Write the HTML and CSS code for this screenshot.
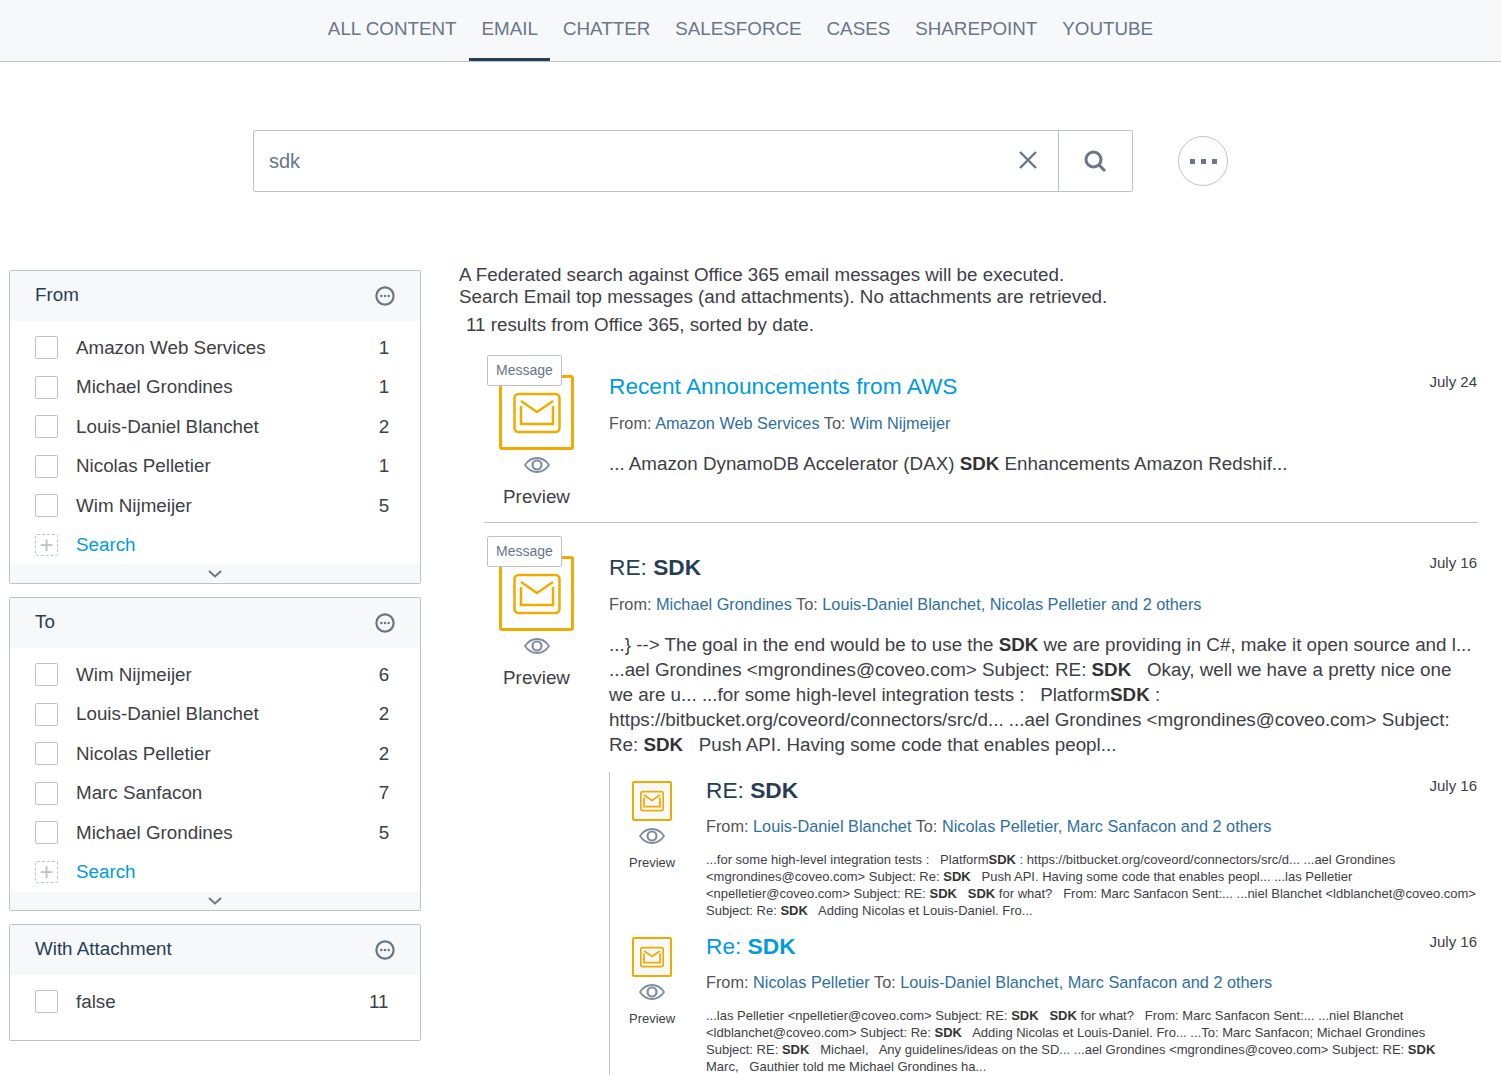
FILE: index.html
```html
<!DOCTYPE html>
<html lang="en">
<head>
    <meta charset="UTF-8">
    <title>Email search</title>
    <link rel="stylesheet" href="styles.css">
</head>
<body>
    <svg class="defs" width="0" height="0">
        <symbol id="mail" viewBox="0 0 48 48">
            <rect x="1.5" y="5" width="45" height="38" rx="4" fill="none" stroke="currentColor"/>
            <path d="M8 17v18h32V17" fill="none" stroke="currentColor"/>
            <path d="M8 12l16 11 16-11" fill="none" stroke="currentColor"/>
        </symbol>
        <symbol id="eye" viewBox="0 0 26 16">
            <path d="M1 8c3-4.500 7-7 12-7s9 2.500 12 7c-3 4.500-7 7-12 7S4 12.500 1 8z" fill="none" stroke="currentColor" stroke-width="1.800"/>
            <circle cx="13" cy="8" r="4.500" fill="none" stroke="currentColor" stroke-width="2.200"/>
        </symbol>
        <symbol id="more" viewBox="0 0 22 22">
            <circle cx="11" cy="11" r="9.500" fill="none" stroke="currentColor" stroke-width="2.400"/>
            <circle cx="7" cy="11" r="1.400" fill="currentColor"/>
            <circle cx="11" cy="11" r="1.400" fill="currentColor"/>
            <circle cx="15" cy="11" r="1.400" fill="currentColor"/>
        </symbol>
        <symbol id="chevron" viewBox="0 0 14 8">
            <path d="M1 1l6 5.500L13 1" fill="none" stroke="currentColor" stroke-width="2"/>
        </symbol>
    </svg>

    <!-- Tabs -->
    <nav class="tabs">
        <a class="tab">ALL CONTENT</a>
        <a class="tab active">EMAIL</a>
        <a class="tab">CHATTER</a>
        <a class="tab">SALESFORCE</a>
        <a class="tab">CASES</a>
        <a class="tab">SHAREPOINT</a>
        <a class="tab">YOUTUBE</a>
    </nav>

    <!-- Search box -->
    <div class="search-row">
        <div class="searchbox">
            <div class="search-input">sdk</div>
            <button class="clear-btn">
                <svg width="20" height="20" viewBox="0 0 20 20"><path d="M2 2l16 16M18 2L2 18" fill="none" stroke="currentColor" stroke-width="2.400"/></svg>
            </button>
            <button class="search-btn">
                <svg width="24" height="24" viewBox="0 0 24 24"><circle cx="10.500" cy="10.500" r="7.500" fill="none" stroke="currentColor" stroke-width="3"/><path d="M16 16l6 6" fill="none" stroke="currentColor" stroke-width="3"/></svg>
            </button>
        </div>
        <div class="settings"><span></span><span></span><span></span></div>
    </div>

    <div class="main">
        <!-- Facets -->
        <aside class="facets">
            <section class="facet">
                <header class="facet-head">From <svg class="facet-more"><use href="#more"/></svg></header>
                <ul class="facet-list">
                    <li><i class="check"></i><span class="label">Amazon Web Services</span><span class="count">1</span></li>
                    <li><i class="check"></i><span class="label">Michael Grondines</span><span class="count">1</span></li>
                    <li><i class="check"></i><span class="label">Louis-Daniel Blanchet</span><span class="count">2</span></li>
                    <li><i class="check"></i><span class="label">Nicolas Pelletier</span><span class="count">1</span></li>
                    <li><i class="check"></i><span class="label">Wim Nijmeijer</span><span class="count">5</span></li>
                    <li><i class="check dashed">+</i><span class="label link">Search</span></li>
                </ul>
                <div class="facet-foot"><svg class="chevron"><use href="#chevron"/></svg></div>
            </section>
            <section class="facet">
                <header class="facet-head">To <svg class="facet-more"><use href="#more"/></svg></header>
                <ul class="facet-list">
                    <li><i class="check"></i><span class="label">Wim Nijmeijer</span><span class="count">6</span></li>
                    <li><i class="check"></i><span class="label">Louis-Daniel Blanchet</span><span class="count">2</span></li>
                    <li><i class="check"></i><span class="label">Nicolas Pelletier</span><span class="count">2</span></li>
                    <li><i class="check"></i><span class="label">Marc Sanfacon</span><span class="count">7</span></li>
                    <li><i class="check"></i><span class="label">Michael Grondines</span><span class="count">5</span></li>
                    <li><i class="check dashed">+</i><span class="label link">Search</span></li>
                </ul>
                <div class="facet-foot"><svg class="chevron"><use href="#chevron"/></svg></div>
            </section>
            <section class="facet">
                <header class="facet-head">With Attachment <svg class="facet-more"><use href="#more"/></svg></header>
                <ul class="facet-list short">
                    <li><i class="check"></i><span class="label">false</span><span class="count wide">11</span></li>
                </ul>
            </section>
        </aside>

        <!-- Results -->
        <div class="results">
            <p class="notice">A Federated search against Office 365 email messages will be executed.<br>Search Email top messages (and attachments). No attachments are retrieved.</p>
            <p class="summary">11 results from Office 365, sorted by date.</p>

            <article class="result first">
                <div class="thumb">
                    <span class="badge">Message</span>
                    <div class="icon-box"><svg class="mail"><use href="#mail"/></svg></div>
                    <svg class="eye"><use href="#eye"/></svg>
                    <div class="preview">Preview</div>
                </div>
                <div class="body">
                    <div class="title-row"><a class="title link">Recent Announcements from AWS</a><span class="date">July 24</span></div>
                    <div class="meta">From: <a>Amazon Web Services</a> To: <a>Wim Nijmeijer</a></div>
                    <p class="excerpt">... Amazon DynamoDB Accelerator (DAX) <b>SDK</b> Enhancements Amazon Redshif...</p>
                </div>
            </article>

            <article class="result">
                <div class="thumb">
                    <span class="badge">Message</span>
                    <div class="icon-box"><svg class="mail"><use href="#mail"/></svg></div>
                    <svg class="eye"><use href="#eye"/></svg>
                    <div class="preview">Preview</div>
                </div>
                <div class="body">
                    <div class="title-row"><a class="title">RE: <b>SDK</b></a><span class="date">July 16</span></div>
                    <div class="meta">From: <a>Michael Grondines</a> To: <a>Louis-Daniel Blanchet, Nicolas Pelletier and 2 others</a></div>
                    <p class="excerpt">...} --&gt; The goal in the end would be to use the <b>SDK</b> we are providing in C#, make it open source and l... ...ael Grondines &lt;mgrondines@coveo.com&gt; Subject: RE: <b>SDK</b> &nbsp; Okay, well we have a pretty nice one we are u... ...for some high-level integration tests : &nbsp; Platform<b>SDK</b> : https://bitbucket.org/coveord/connectors/src/d... ...ael Grondines &lt;mgrondines@coveo.com&gt; Subject: Re: <b>SDK</b> &nbsp; Push API. Having some code that enables peopl...</p>

                    <div class="children">
                        <div class="child">
                            <div class="child-thumb">
                                <div class="child-icon"><svg class="mail"><use href="#mail"/></svg></div>
                                <svg class="eye"><use href="#eye"/></svg>
                                <div class="child-preview">Preview</div>
                            </div>
                            <div class="body">
                                <div class="title-row"><a class="title">RE: <b>SDK</b></a><span class="date">July 16</span></div>
                                <div class="meta">From: <a>Louis-Daniel Blanchet</a> To: <a>Nicolas Pelletier, Marc Sanfacon and 2 others</a></div>
                                <p class="child-excerpt">...for some high-level integration tests : &nbsp; Platform<b>SDK</b> : https://bitbucket.org/coveord/connectors/src/d... ...ael Grondines<br>&lt;mgrondines@coveo.com&gt; Subject: Re: <b>SDK</b> &nbsp; Push API. Having some code that enables peopl... ...las Pelletier<br>&lt;npelletier@coveo.com&gt; Subject: RE: <b>SDK</b> &nbsp; <b>SDK</b> for what? &nbsp; From: Marc Sanfacon Sent:... ...niel Blanchet &lt;ldblanchet@coveo.com&gt;<br>Subject: Re: <b>SDK</b> &nbsp; Adding Nicolas et Louis-Daniel. Fro...</p>
                            </div>
                        </div>
                        <div class="child">
                            <div class="child-thumb">
                                <div class="child-icon"><svg class="mail"><use href="#mail"/></svg></div>
                                <svg class="eye"><use href="#eye"/></svg>
                                <div class="child-preview">Preview</div>
                            </div>
                            <div class="body">
                                <div class="title-row"><a class="title link">Re: <b>SDK</b></a><span class="date">July 16</span></div>
                                <div class="meta">From: <a>Nicolas Pelletier</a> To: <a>Louis-Daniel Blanchet, Marc Sanfacon and 2 others</a></div>
                                <p class="child-excerpt">...las Pelletier &lt;npelletier@coveo.com&gt; Subject: RE: <b>SDK</b> &nbsp; <b>SDK</b> for what? &nbsp; From: Marc Sanfacon Sent:... ...niel Blanchet<br>&lt;ldblanchet@coveo.com&gt; Subject: Re: <b>SDK</b> &nbsp; Adding Nicolas et Louis-Daniel. Fro... ...To: Marc Sanfacon; Michael Grondines<br>Subject: RE: <b>SDK</b> &nbsp; Michael, &nbsp; Any guidelines/ideas on the SD... ...ael Grondines &lt;mgrondines@coveo.com&gt; Subject: RE: <b>SDK</b><br>Marc, &nbsp; Gauthier told me Michael Grondines ha...</p>
                            </div>
                        </div>
                    </div>
                </div>
            </article>
        </div>
    </div>
</body>
</html>
```

FILE: styles.css
```css
/* Basic reset */
* {
    margin: 0;
    padding: 0;
    box-sizing: border-box;
}

html, body {
    height: 1075px;
    overflow: hidden;
}

body {
    font-family: "Liberation Sans", Arial, sans-serif;
    font-size: 18.8px;
    color: #3d4045;
    background: #fff;
}

.defs {
    position: absolute;
}

a {
    color: inherit;
}

/* Tabs */
.tabs {
    display: flex;
    justify-content: center;
    height: 62px;
    background: #f7f8f9;
    border-bottom: 1px solid #bcc3ca;
    padding-right: 20px;
}

.tab {
    height: 61px;
    padding: 17px 12.5px 0;
    line-height: 23px;
    color: #67768b;
}

.tab.active {
    border-bottom: 3px solid #263e55;
}

/* Search box */
.search-row {
    display: flex;
    align-items: center;
    padding: 68px 0 0 253px;
}

.searchbox {
    display: flex;
    width: 880px;
    height: 62px;
    border: 1px solid #bcc3ca;
    border-radius: 2px;
}

.search-input {
    flex: 1;
    padding-left: 15px;
    font-size: 20px;
    line-height: 60px;
    color: #67768b;
}

.clear-btn, .search-btn {
    display: flex;
    align-items: center;
    justify-content: center;
    border: none;
    background: none;
    color: #67768b;
}

.clear-btn {
    width: 60px;
    padding: 0 1px 3px 0;
}

.search-btn {
    width: 74px;
    padding-right: 2px;
    border-left: 1px solid #bcc3ca;
}

.settings {
    display: flex;
    align-items: center;
    justify-content: center;
    gap: 6px;
    width: 50px;
    height: 50px;
    margin-left: 45px;
    border: 1px solid #bcc3ca;
    border-radius: 50%;
}

.settings span {
    width: 5px;
    height: 5px;
    background: #67768b;
}

/* Page columns */
.main {
    display: flex;
    align-items: flex-start;
    padding: 78px 23px 0 9px;
}

.facets {
    flex: 0 0 412px;
    margin-right: 38px;
}

.facet {
    border: 1px solid #bcc3ca;
    border-radius: 2px;
    margin-bottom: 13px;
}

.facet-head {
    display: flex;
    justify-content: space-between;
    height: 50px;
    padding: 13px 25px 0;
    line-height: 22px;
    background: #f7f8f9;
    color: #263e55;
}

.facet-more {
    width: 20px;
    height: 20px;
    margin-top: 2px;
    color: #67768b;
}

.facet-list {
    list-style: none;
    padding: 7px 30px 0 25px;
    height: 243px;
}

.facet-list.short {
    height: 65px;
}

.facet-list li {
    display: flex;
    align-items: center;
    height: 39.5px;
}

.check {
    flex: none;
    width: 23px;
    height: 23px;
    margin-right: 18px;
    border: 1px solid #bcc3ca;
    border-radius: 2px;
    font-style: normal;
}

.check.dashed {
    height: 22px;
    border: 1px dashed #bcc3ca;
    color: #bcc3ca;
    font-size: 24px;
    line-height: 20px;
    text-align: center;
}

.label {
    flex: 1;
}

.link {
    color: #009bdf;
}

.count {
    width: 12px;
    text-align: center;
}

.count.wide {
    width: 18px;
    text-align: right;
    margin-right: 3px;
}

.facet-foot {
    display: flex;
    justify-content: center;
    height: 19px;
    padding-top: 6px;
    background: #f7f8f9;
}

.chevron {
    width: 14px;
    height: 8px;
    color: #67768b;
}

/* Results */
.results {
    flex: 1;
    min-width: 0;
    margin-top: -6px;
}

.notice {
    line-height: 22px;
}

.summary {
    padding: 5px 0 0 7px;
    line-height: 23px;
}

.result {
    position: relative;
    display: flex;
    margin-left: 25px;
}

.result.first {
    height: 167px;
    margin-top: 20px;
    padding-top: 19px;
    border-bottom: 1px solid #bcc3ca;
}

.result:not(.first) {
    padding-top: 33px;
}

.thumb {
    flex: none;
    width: 125px;
    padding-left: 15px;
    text-align: center;
}

.badge {
    position: absolute;
    top: -1px;
    left: 3px;
    height: 31px;
    padding: 0 8px;
    line-height: 29px;
    font-size: 14px;
    color: #67768b;
    background: #fff;
    border: 1px solid #bcc3ca;
    border-radius: 2px;
}

.result:not(.first) .badge {
    top: 13px;
}

.icon-box {
    display: flex;
    align-items: center;
    justify-content: center;
    width: 75px;
    height: 75px;
    border: 3px solid #f0ab00;
    border-radius: 3px;
    color: #f0ab00;
}

.mail {
    width: 48px;
    height: 48px;
    stroke-width: 2.5;
}

.eye {
    display: block;
    width: 26px;
    height: 16px;
    margin: 7px auto 0 25px;
    color: #7f8c9c;
}

.preview {
    width: 75px;
    margin-top: 12px;
    line-height: 23px;
    white-space: nowrap;
}

.body {
    flex: 1;
    min-width: 0;
}

.title-row {
    display: flex;
    justify-content: space-between;
    margin-top: -3px;
}

.title {
    font-size: 22.7px;
    line-height: 28px;
    color: #263e55;
}

.title.link {
    color: #009bdf;
}

.date {
    font-size: 15px;
    line-height: 17px;
    padding: 1px 1px 0 0;
}

.meta {
    margin-top: 14px;
    font-size: 16.3px;
    line-height: 19px;
    color: #555;
}

.meta a {
    color: #2f6f9f;
}

.excerpt {
    margin-top: 18px;
    line-height: 25px;
}

.excerpt b, .child-excerpt b {
    color: #333;
}

/* Nested results */
.children {
    margin-top: 15px;
    border-left: 1px solid #bcc3ca;
}

.child {
    display: flex;
    height: 156px;
    padding-top: 9px;
}

.child .title-row {
    margin-top: -5px;
}

.child .meta {
    margin-top: 13px;
}

.child-thumb {
    flex: none;
    width: 96px;
    padding-left: 22px;
}

.child-icon {
    display: flex;
    align-items: center;
    justify-content: center;
    width: 40px;
    height: 40px;
    border: 2px solid #f0ab00;
    border-radius: 2px;
    color: #f0ab00;
    background: #f7f8f9;
}

.child-icon .mail {
    width: 24px;
    height: 24px;
    stroke-width: 3.5;
}

.child-thumb .eye {
    margin: 7px 0 0 7px;
}

.child-preview {
    margin: 10px 0 0 -3px;
    font-size: 13px;
    line-height: 17px;
}

.child-excerpt {
    margin-top: 15px;
    font-size: 13px;
    line-height: 17px;
    white-space: nowrap;
}
```
